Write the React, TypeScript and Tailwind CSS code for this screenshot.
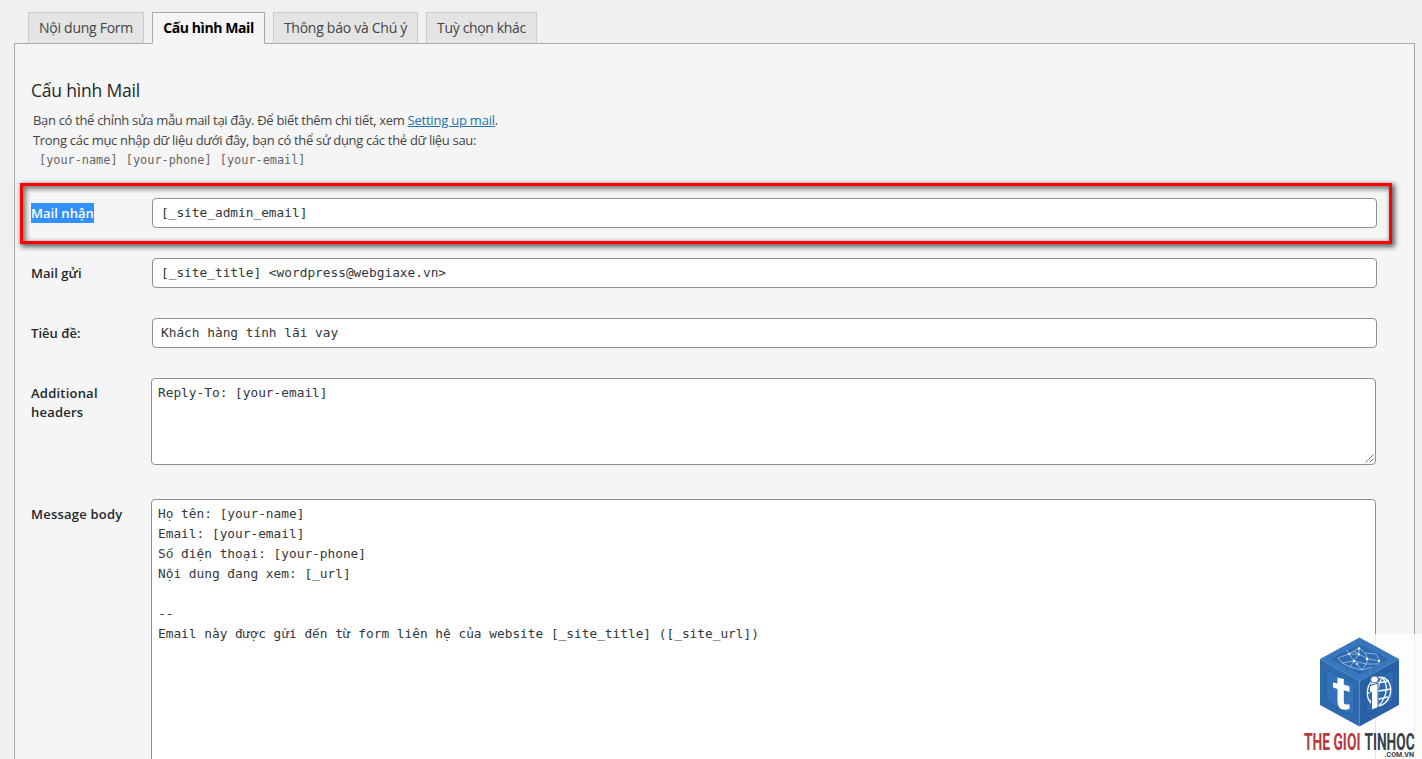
import { clsx } from "clsx";

type Tab = { label: string; width: string; tracking: string };

const tabs: Tab[] = [
  { label: "Nội dung Form", width: "w-[116px]", tracking: "tracking-[-0.28px]" },
  { label: "Cấu hình Mail", width: "w-[113px]", tracking: "tracking-[-0.42px]" },
  { label: "Thông báo và Chú ý", width: "w-[145px]", tracking: "tracking-[-0.27px]" },
  { label: "Tuỳ chọn khác", width: "w-[111px]", tracking: "tracking-[-0.35px]" },
];

const message = `Họ tên: [your-name]
Email: [your-email]
Số điện thoại: [your-phone]
Nội dung đang xem: [_url]

--
Email này được gửi đến từ form liên hệ của website [_site_title] ([_site_url])`;

// DejaVu Sans Mono misplaces the accents on these letters
function Mono({ text }: { text: string }) {
  return (
    <span>
      {text.split(/([ốếử])/).map((part, i) =>
        i % 2 ? (
          <span key={i} className="font-['Liberation_Mono',monospace] leading-none">
            {part}
          </span>
        ) : (
          part
        )
      )}
    </span>
  );
}

function TabBar({ active }: { active: number }) {
  return (
    <nav className="flex h-8 gap-2 pl-7">
      {tabs.map((tab, i) => (
        <a
          key={tab.label}
          className={clsx(
            "flex h-8 items-center justify-center border pb-0.5 text-[14px] whitespace-nowrap",
            tab.width,
            tab.tracking,
            i === active
              ? "z-10 border-[#a8a8a8] border-b-[#f5f5f5] bg-[#f5f5f5] font-bold text-black"
              : "border-[#ccc] border-b-[#aaa] bg-[#e4e4e4] text-[#444]"
          )}
        >
          {tab.label}
        </a>
      ))}
    </nav>
  );
}

type FieldProps = {
  label: string;
  value: string;
  selected?: boolean;
};

function Field({ label, value, selected }: FieldProps) {
  return (
    <div className="flex h-[60px] items-start">
      <label className="flex h-[30px] w-[121px] items-center text-[13px] font-semibold tracking-[0.04px] text-[#23282d]">
        <span className={clsx("leading-5", selected && "bg-[#3390ff] text-white")}>
          {label}
        </span>
      </label>
      <div className="flex h-[30px] w-[1225px] items-center rounded border border-[#8c8f94] bg-white px-2 font-['DejaVu_Sans_Mono',monospace] text-[12.8px] text-[#32373c]">
        <Mono text={value} />
      </div>
    </div>
  );
}

function Area({ label, value, height }: { label: string; value: string; height: string }) {
  return (
    <div className="flex items-start">
      <label className="w-[120px] pt-1.5 pr-4 text-[13px] leading-[19px] font-semibold tracking-[0.22px] text-[#23282d]">
        {label}
      </label>
      <div
        className={clsx(
          "relative w-[1225px] rounded border border-[#8c8f94] bg-white px-1.5 pt-1 font-['DejaVu_Sans_Mono',monospace] text-[12.8px] leading-5 whitespace-pre text-[#32373c]",
          height
        )}
      >
        <Mono text={value} />
        <svg
          className="absolute right-px bottom-px"
          width="9"
          height="9"
          stroke="#555"
          strokeWidth="0.8"
        >
          <path d="M0.5 8.5L8.5 0.5M4.5 8.5L8.5 4.5" />
        </svg>
      </div>
    </div>
  );
}

function Logo() {
  return (
    <svg
      className="absolute top-[634px] left-[1298px] z-30"
      width="124"
      height="125"
      viewBox="0 0 124 125"
    >
      <rect width="124" height="125" fill="#fff" fillOpacity="0.78" />
      {/* cube faces */}
      <path d="M22 25L61.5 3.5L101 25L61.5 47Z" fill="#3777bd" />
      <path d="M22 25L61.5 47V92.5L22 71Z" fill="#2f69ae" />
      <path d="M61.5 47L101 25V71L61.5 92.5Z" fill="#2861a6" />
      <path d="M34 25L61.5 11L89 25L61.5 39.5Z" fill="#2f6bb1" stroke="#2860a4" strokeWidth="0.8" />
      <path d="M28 36L56 50.5V82L28 67Z" fill="#3372b8" stroke="#28609f" strokeWidth="0.8" />
      <path d="M68 50.5L95.5 35.5V66.5L68 81Z" fill="#2d6ab0" stroke="#225594" strokeWidth="0.8" />
      {/* network on the lid */}
      <path
        d="M40 24L51 20L49 16M51 20L61 14L67 19L78 20L82 27L70 25L61 20L51 20L56 27L44 29L40 24M61 14L61 20L56 27L68 30L70 25L67 19M44 29L52 33L56 27L64 36L68 30L80 30L82 27M52 33L64 36L74 33M56 17L61 20"
        fill="none"
        stroke="#c9def4"
        strokeWidth="0.6"
      />
      <g fill="#fff">
        <circle cx="51" cy="20" r="0.9" />
        <circle cx="61" cy="14.5" r="1.2" />
        <circle cx="61" cy="20.5" r="1" />
        <circle cx="56" cy="27" r="1.2" />
        <circle cx="69" cy="25" r="1.3" />
        <circle cx="81" cy="27" r="1.1" />
        <circle cx="59" cy="30" r="0.9" />
      </g>
      {/* left mark */}
      <path
        d="M39.5 43.5L45.8 45V50.5L51.5 52.5V58L45.8 56.3V68Q46 71.5 51.5 70.3V75Q39.5 78 39.5 67.5V55L35 53.5V48.5L39.5 49.5Z"
        fill="#fff"
      />
      {/* globe and right mark */}
      <g fill="none" stroke="#fff" strokeWidth="1.3">
        <ellipse cx="81" cy="57.5" rx="11.5" ry="14.5" transform="rotate(14 81 57.5)" />
        <path d="M84 43Q94 55 81 72M84 43Q78 54 80 72M73 50L91 47M69 59L93 55M72 67L90 63" />
      </g>
      <path
        d="M71.5 52L80 49V73.5L73.5 76V58L71.5 58.5Z"
        fill="#fff"
        stroke="#2d6ab0"
        strokeWidth="1"
      />
      <ellipse cx="76.5" cy="45.5" rx="3.8" ry="3.4" fill="#fff" stroke="#2d6ab0" strokeWidth="0.8" />
      <g className="font-['Roboto',sans-serif] font-bold">
        <text transform="translate(6 116) scale(0.575 1)" fontSize="24" fill="#b83a40">
          THE GIOI
        </text>
        <text transform="translate(66.5 116) scale(0.57 1)" fontSize="24" fill="#36424b">
          TINHOC
        </text>
        <text transform="translate(86.5 122.5) scale(1.09 1)" fontSize="6.5" fill="#36424b">
          .COM.VN
        </text>
      </g>
    </svg>
  );
}

export default function App() {
  return (
    <div className="relative h-[759px] w-[1422px] overflow-hidden bg-[#f0f0f0] pt-3 font-['Open_Sans',sans-serif]">
      <TabBar active={1} />
      <main className="-mt-px ml-3.5 h-[760px] w-[1401px] border border-[#a8a8a8] bg-[#f5f5f5] pt-[34px] pl-4">
        <h2 className="h-[26px] text-[17.5px] leading-[25px] tracking-[-0.2px] text-[#23282d]">
          Cấu hình Mail
        </h2>
        <div className="mt-1.5 pl-0.5 text-[13px] leading-5 whitespace-nowrap text-[#444]">
          <p className="tracking-[-0.32px]">
            Bạn có thể chỉnh sửa mẫu mail tại đây. Để biết thêm chi tiết, xem{" "}
            <a className="tracking-[-0.22px] text-[#2271b1] underline">Setting up mail</a>.
          </p>
          <p className="tracking-[-0.31px]">
            Trong các mục nhập dữ liệu dưới đây, bạn có thể sử dụng các thẻ dữ liệu sau:
          </p>
          <p className="flex gap-[8.3px] pl-1.5 text-[11.87px] text-[#666]">
            <code className="font-['DejaVu_Sans_Mono',monospace]">[your-name]</code>
            <code className="font-['DejaVu_Sans_Mono',monospace]">[your-phone]</code>
            <code className="font-['DejaVu_Sans_Mono',monospace]">[your-email]</code>
          </p>
        </div>
        <div className="mt-7">
          <Field label="Mail nhận" value="[_site_admin_email]" selected />
          <Field label="Mail gửi" value="[_site_title] <wordpress@webgiaxe.vn>" />
          <Field label="Tiêu đề:" value="Khách hàng tính lãi vay" />
        </div>
        <div className="flex flex-col gap-[34px]">
          <Area label="Additional headers" value="Reply-To: [your-email]" height="h-[87px]" />
          <Area label="Message body" value={message} height="h-[400px]" />
        </div>
      </main>
      {/* highlighted row */}
      <div className="absolute top-[183px] left-[20px] z-20 h-[61px] w-[1372px] border-[3px] border-[#f00] shadow-[2px_2px_5px_1px_rgba(0,0,0,0.6),inset_2px_2px_5px_1px_rgba(0,0,0,0.5)]" />
      <Logo />
    </div>
  );
}
